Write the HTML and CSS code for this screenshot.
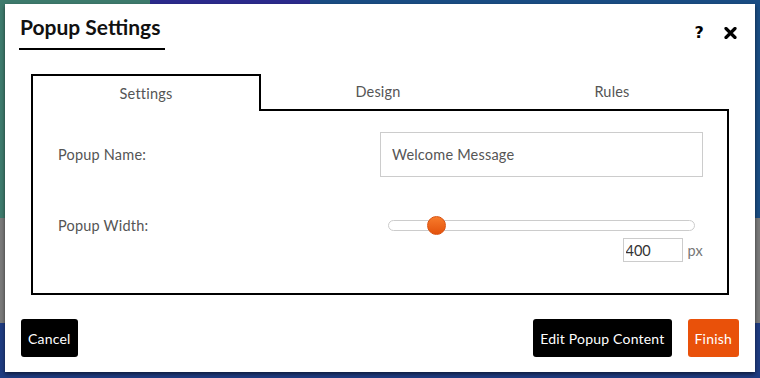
FILE: index.html
```html
<!DOCTYPE html>
<html lang="en">
<head>
    <meta charset="UTF-8">
    <meta name="viewport" content="width=device-width, initial-scale=1.0">
    <title>Popup Settings</title>
    <link rel="stylesheet" href="styles.css">
</head>
<body>
    <div class="popup">
        <div class="popup-head">
            <h2 class="popup-title">Popup Settings</h2>
            <div class="popup-tools">
                <span class="help">?</span>
                <svg class="close" width="13" height="12" viewBox="0 0 13 12">
                    <path d="M2 1.5 L11 10.5 M11 1.5 L2 10.5" stroke="#000" stroke-width="3.2" stroke-linecap="round"/>
                </svg>
            </div>
        </div>

        <div class="tabs">
            <div class="tab active">Settings</div>
            <div class="tab">Design</div>
            <div class="tab">Rules</div>
        </div>

        <div class="tab-body">
            <div class="field">
                <label class="field-label">Popup Name:</label>
                <input type="text" class="text-input" value="Welcome Message">
            </div>

            <div class="field field-width">
                <label class="field-label">Popup Width:</label>
                <div class="slider">
                    <span class="slider-thumb"></span>
                </div>
            </div>

            <div class="px-row">
                <input type="text" class="num-input" value="400">
                <span class="px-unit">px</span>
            </div>
        </div>

        <div class="popup-foot">
            <button class="btn btn-dark">Cancel</button>
            <div class="foot-right">
                <button class="btn btn-dark">Edit Popup Content</button>
                <button class="btn btn-orange">Finish</button>
            </div>
        </div>
    </div>
</body>
</html>
```

FILE: styles.css
```css
/* Page behind the popup */
body {
    margin: 0;
    padding: 4px 5px 0;
    height: 378px;
    box-sizing: border-box;
    overflow: hidden;
    font-family: Lato, "Noto Sans", sans-serif;
    letter-spacing: 0.2px;
    background:
        linear-gradient(to right, #3e7b6d 0 150px, #2c2a8d 150px 310px, #1a4d84 310px) 0 0 / 100% 218px no-repeat,
        linear-gradient(#7a7a7a, #7a7a7a) 0 218px / 100% 105px no-repeat,
        #1f3c82;
}

/* Popup box */
.popup {
    width: 750px;
    height: 368px;
    box-sizing: border-box;
    background: #ffffff;
    box-shadow: 0 2px 4px rgba(0, 0, 0, 0.55);
    display: flex;
    flex-direction: column;
}

.popup-head {
    display: flex;
    justify-content: space-between;
    align-items: flex-start;
    padding: 0 18px 0 14px;
}

.popup-title {
    margin: 0;
    padding: 11px 5px 9px 1px;
    font-size: 21px;
    line-height: 24px;
    font-weight: 700;
    letter-spacing: 0;
    color: #111;
    border-bottom: 2px solid #000;
}

.popup-tools {
    display: flex;
    align-items: center;
    gap: 20px;
    padding-top: 22px;
}

.help {
    font-family: "DejaVu Sans", sans-serif;
    font-size: 16px;
    font-weight: 700;
    line-height: 14px;
    color: #000;
}

.close {
    display: block;
}

/* Tabs */
.tabs {
    display: flex;
    margin: 24px 26px 0;
    height: 37px;
}

.tab {
    flex: 1;
    display: flex;
    align-items: center;
    justify-content: center;
    box-sizing: border-box;
    font-size: 14.5px;
    color: #555;
    border-bottom: 2px solid #000;
}

.tab.active {
    flex: 0 0 230px;
    border: 2px solid #000;
    border-bottom: none;
}

.tab-body {
    margin: 0 26px;
    height: 184px;
    box-sizing: border-box;
    border: 2px solid #000;
    border-top: none;
    padding: 21px 24px 0 25px;
    display: flex;
    flex-direction: column;
}

.field {
    display: grid;
    grid-template-columns: 322px 1fr;
    align-items: center;
}

.field-width {
    margin-top: 39px;
    height: 19px;
}

.field-label {
    font-size: 14.5px;
    color: #555;
}

.text-input {
    height: 45px;
    box-sizing: border-box;
    border: 1px solid #ccc;
    padding: 0 11px;
    font-family: inherit;
    font-size: 14.5px;
    letter-spacing: 0.2px;
    color: #555;
    outline: none;
}

.slider {
    position: relative;
    margin: 0 8px;
    height: 11px;
    box-sizing: border-box;
    border: 1px solid #ccc;
    border-radius: 6px;
    background: #fff;
}

.slider-thumb {
    position: absolute;
    left: 38px;
    top: -5px;
    width: 19px;
    height: 19px;
    box-sizing: border-box;
    border-radius: 50%;
    border: 1px solid #d9500e;
    background: linear-gradient(#f77b2b, #e4520c);
}

.px-row {
    display: flex;
    justify-content: flex-end;
    align-items: center;
    gap: 5px;
    margin-top: 3px;
}

.num-input {
    width: 60px;
    height: 24px;
    box-sizing: border-box;
    border: 1px solid #ccc;
    padding: 0 2px;
    font-family: inherit;
    font-size: 14.5px;
    color: #333;
    outline: none;
}

.px-unit {
    font-size: 14.5px;
    color: #777;
}

/* Footer buttons */
.popup-foot {
    display: flex;
    justify-content: space-between;
    margin-top: 24px;
    padding: 0 16px;
}

.foot-right {
    display: flex;
    gap: 16px;
}

.btn {
    height: 38px;
    padding: 0 7px;
    border: none;
    border-radius: 3px;
    font-family: inherit;
    font-size: 14px;
    letter-spacing: 0.2px;
    color: #fff;
    cursor: pointer;
}

.btn-dark {
    background: #000;
}

.btn-orange {
    background: #e9510a;
}
```
